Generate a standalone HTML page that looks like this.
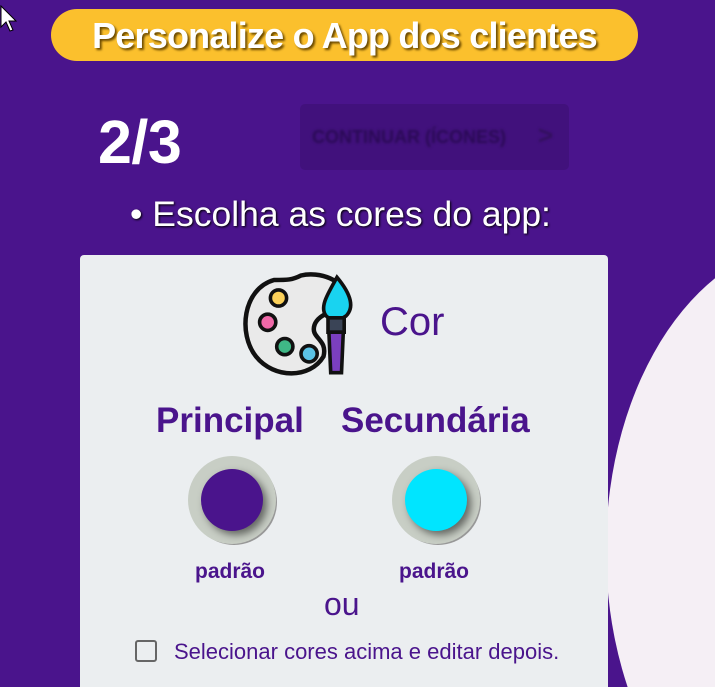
<!DOCTYPE html>
<html style="width:715px;height:687px;overflow:hidden"><head><style>
body{margin:0;width:715px;height:687px;overflow:hidden;background:#4a148c;font-family:"Liberation Sans",sans-serif;position:relative}
.a{position:absolute;white-space:nowrap}
</style></head><body>
<svg class="a" style="left:0;top:0" width="715" height="687"><ellipse cx="816" cy="550" rx="210" ry="310" fill="#f5eff5"/></svg>
<div class="a" style="left:51px;top:9px;width:587px;height:52px;border-radius:26px;background:#fbc02d"></div>
<div class="a" style="left:51px;top:15px;width:587px;text-align:center;color:#fff;font-weight:bold;font-size:36px;letter-spacing:-0.8px;text-shadow:2px 2px 2px #6b4a00">Personalize o App dos clientes</div>
<div class="a" style="left:98px;top:107px;color:#fff;font-weight:bold;font-size:61px;letter-spacing:-0.5px">2/3</div>
<div class="a" style="left:300px;top:104px;width:269px;height:66px;border-radius:5px;background:#41117c"></div>
<div class="a" style="left:312px;top:127px;color:#2a0a55;font-weight:bold;font-size:18px;filter:blur(1.2px)">CONTINUAR (ÍCONES)</div>
<div class="a" style="left:538px;top:120px;color:#33105f;font-weight:bold;font-size:26px;filter:blur(1px)">&gt;</div>
<div class="a" style="left:130px;top:194px;color:#fff;font-size:35.5px;text-shadow:1px 1px 2px #000">• Escolha as cores do app:</div>
<div class="a" style="left:80px;top:255px;width:528px;height:432px;border-radius:4px 4px 0 0;background:#ebeef0"></div>
<svg class="a" style="left:238px;top:262px" width="126" height="126" viewBox="0 0 140 130">
<path d="M40 15 C5 25 0 75 20 100 C40 125 80 125 95 100 C100 80 80 80 85 65 C90 50 115 50 118 35 C120 15 90 5 70 10 C60 15 55 15 40 15Z" fill="#eaeaea" stroke="#111" stroke-width="5"/>
<circle cx="45" cy="35" r="9" fill="#fcd15a" stroke="#111" stroke-width="4"/>
<circle cx="33" cy="62" r="9" fill="#f069a8" stroke="#111" stroke-width="4"/>
<circle cx="52" cy="89" r="9" fill="#3fb886" stroke="#111" stroke-width="4"/>
<circle cx="79" cy="97" r="9" fill="#5bc3e6" stroke="#111" stroke-width="4"/>
<path d="M110 12 C125 30 130 45 120 55 C113 60 103 60 98 55 C90 45 100 30 110 12Z" fill="#19d3f0" stroke="#111" stroke-width="4"/>
<rect x="100" y="57" width="18" height="16" fill="#3a4456" stroke="#111" stroke-width="4"/>
<path d="M101 73 L117 73 L115 118 L103 118Z" fill="#7b3fbf" stroke="#111" stroke-width="4"/>
</svg>
<div class="a" style="left:380px;top:300px;color:#4a148c;font-size:40px">Cor</div>
<div class="a" style="left:156px;top:401px;color:#4a148c;font-weight:bold;font-size:35px">Principal</div>
<div class="a" style="left:341px;top:401px;color:#4a148c;font-weight:bold;font-size:35px">Secundária</div>
<div class="a" style="left:188px;top:456px;width:88px;height:88px;border-radius:50%;background:#c8cec5;box-shadow:2px 2px 0 -1px #999"></div>
<div class="a" style="left:201px;top:469px;width:62px;height:62px;border-radius:50%;background:#4a148c;box-shadow:4px 4px 8px rgba(0,0,0,.5)"></div>
<div class="a" style="left:392px;top:456px;width:88px;height:88px;border-radius:50%;background:#c8cec5;box-shadow:2px 2px 0 -1px #999"></div>
<div class="a" style="left:405px;top:469px;width:62px;height:62px;border-radius:50%;background:#00e5ff;box-shadow:4px 4px 8px rgba(0,0,0,.5)"></div>
<div class="a" style="left:195px;top:560px;color:#4a148c;font-weight:bold;font-size:21px">padrão</div>
<div class="a" style="left:399px;top:560px;color:#4a148c;font-weight:bold;font-size:21px">padrão</div>
<div class="a" style="left:324px;top:586px;color:#4a148c;font-size:32px">ou</div>
<div class="a" style="left:135px;top:640px;width:18px;height:18px;border:2.5px solid #666;border-radius:3px"></div>
<div class="a" style="left:174px;top:639px;color:#4a148c;font-size:22px">Selecionar cores acima e editar depois.</div>
<svg class="a" style="left:0;top:5px" width="20" height="30"><path d="M1 1 L1 22 L6 17 L10 26 L13 25 L9 16 L16 16Z" fill="#fff" stroke="#000"/></svg>
</body></html>
